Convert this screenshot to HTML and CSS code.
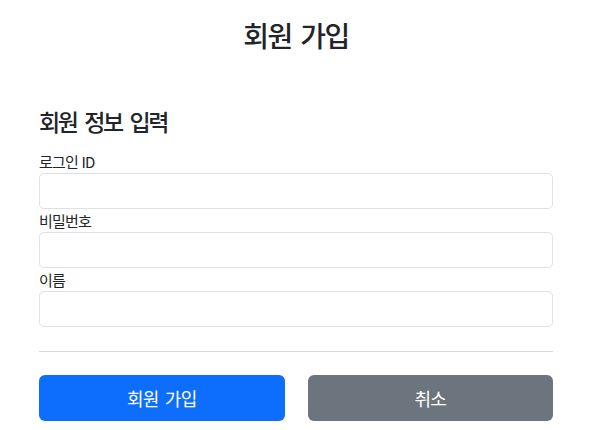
FILE: index.html
```html
<!DOCTYPE html>
<html lang="ko">
<head>
<meta charset="utf-8">
<title>회원 가입</title>
<link rel="stylesheet" href="styles.css">
</head>
<body>
<div class="container">
  <h2 class="title">회원 가입</h2>
  <h4 class="subtitle">회원 정보 입력</h4>
  <form class="form">
    <div class="field">
      <label class="label" for="loginId">로그인 ID</label>
      <input class="input" type="text" id="loginId">
    </div>
    <div class="field">
      <label class="label" for="password">비밀번호</label>
      <input class="input" type="password" id="password">
    </div>
    <div class="field">
      <label class="label" for="name">이름</label>
      <input class="input" type="text" id="name">
    </div>
    <hr class="divider">
    <div class="actions">
      <button class="btn btn-primary" type="submit">회원 가입</button>
      <button class="btn btn-secondary" type="button">취소</button>
    </div>
  </form>
</div>
</body>
</html>
```

FILE: styles.css
```css
* { box-sizing: border-box; }
body {
  margin: 0;
  background: #fff;
  color: #212529;
  font-family: "Noto Sans CJK KR", "Noto Sans", sans-serif;
}
.container {
  width: 514px;
  margin: 0 auto;
  padding-top: 18px;
}
.title {
  margin: 0;
  text-align: center;
  font-size: 28px;
  line-height: 34px;
  font-weight: 500;
  letter-spacing: -1.5px;
  word-spacing: 2px;
}
.subtitle {
  margin: 54px 0 0;
  font-size: 23px;
  line-height: 30px;
  font-weight: 500;
  letter-spacing: -2.5px;
  word-spacing: 4px;
}
.form {
  margin-top: 14px;
}
.field {
  display: flex;
  flex-direction: column;
}
.label {
  font-size: 15px;
  line-height: 23px;
  letter-spacing: -0.8px;
}
.input {
  height: 36px;
  width: 100%;
  border: 1px solid #dee2e6;
  border-radius: 5px;
  background: #fff;
  font: inherit;
  padding: 6px 12px;
}
.divider {
  margin: 24px 0 23px;
  border: 0;
  border-top: 1px solid #d7d8d9;
  height: 0;
}
.actions {
  display: grid;
  grid-template-columns: 1fr 1fr;
  gap: 23px;
}
.btn {
  height: 46px;
  border: 0;
  border-radius: 6px;
  color: #fff;
  font-family: inherit;
  font-size: 18px;
  letter-spacing: -0.8px;
  word-spacing: 2px;
}
.btn-primary { background: #0d6efd; }
.btn-secondary { background: #6c757d; }
```
